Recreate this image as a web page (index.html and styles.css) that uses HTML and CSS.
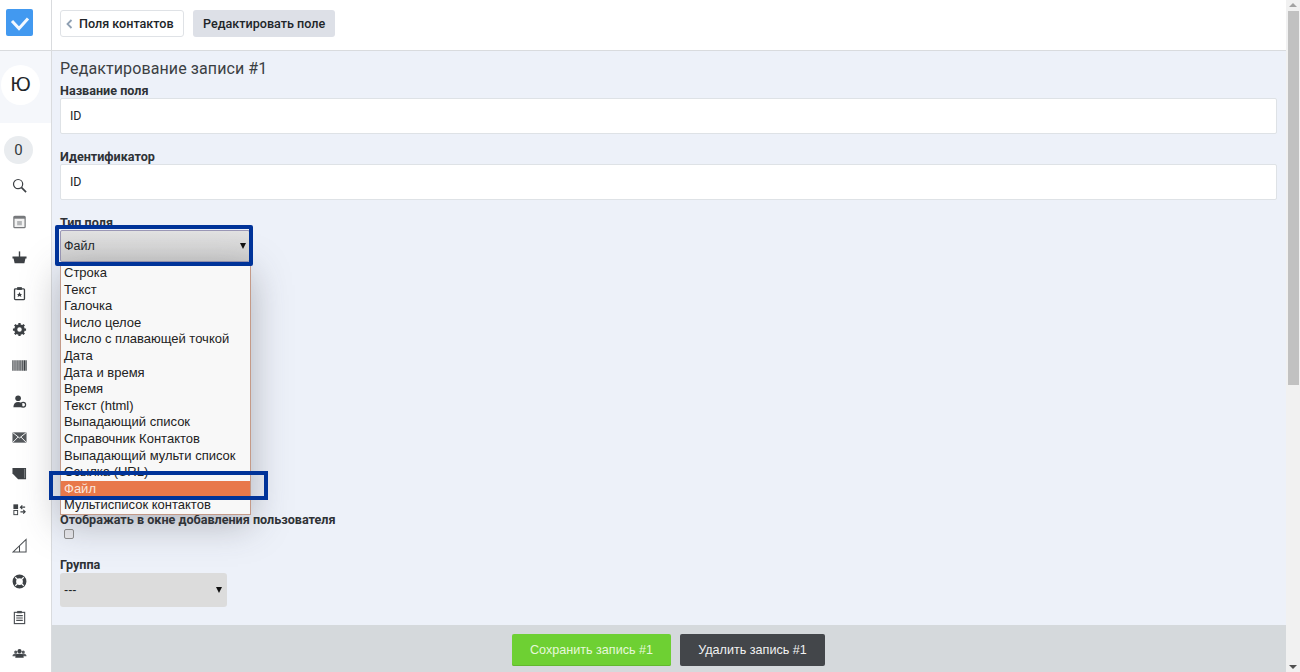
FILE: index.html
```html
<!DOCTYPE html>
<html lang="ru">
<head>
<meta charset="utf-8">
<title>Редактирование записи</title>
<link rel="stylesheet" href="styles.css">
</head>
<body>
<div class="app">
  <aside class="sidebar">
    <div class="logo-cell">
      <span class="logo">
        <svg viewBox="0 0 27 27" width="27" height="27"><path d="M6 12l7 7.500 9-10" fill="none" stroke="#f2f8ff" stroke-width="3"/></svg>
      </span>
    </div>
    <div class="user-cell"><span class="avatar">Ю</span></div>
    <nav class="nav">
      <div class="nav-item"><span class="counter">0</span></div>
      <div class="nav-item"><svg class="ico" viewBox="0 0 16 16"><circle cx="6.500" cy="6.500" r="4.900" fill="none" stroke="#3d4145" stroke-width="1.300"/><path d="M10 10l5 5" stroke="#3d4145" stroke-width="1.800"/></svg></div>
      <div class="nav-item"><svg class="ico" viewBox="0 0 16 16"><rect x="2" y="2.500" width="12" height="12" rx="1" fill="#f2f2f2" stroke="#77797c" stroke-width="1.300"/><rect x="2" y="2.500" width="12" height="2.500" fill="#77797c"/><rect x="5.500" y="7.500" width="5" height="4.500" fill="#b3b5b7"/></svg></div>
      <div class="nav-item"><svg class="ico" viewBox="0 0 16 16"><path d="M.500 7h15v2h-1.200l-1.100 5H2.800L1.700 9H.500z" fill="#3d4145"/><path d="M8 1.500V9" stroke="#3d4145" stroke-width="1.500"/></svg></div>
      <div class="nav-item"><svg class="ico" viewBox="0 0 16 16"><rect x="2.700" y="3" width="10.600" height="11.500" rx="1" fill="none" stroke="#3d4145" stroke-width="1.400"/><rect x="5.500" y="1.200" width="5" height="3" fill="#3d4145"/><path d="M8 6.500l1 2h1.800l-1.300 1.200.5 2L8 10.600l-2 1.100.5-2L5.200 8.500H7z" fill="#3d4145"/></svg></div>
      <div class="nav-item"><svg class="ico" viewBox="0 0 16 16"><circle cx="8" cy="8" r="4" fill="none" stroke="#3d4145" stroke-width="3.200"/><path d="M8 1v3M8 12v3M1 8h3M12 8h3M3 3l2.200 2.200M10.800 10.800L13 13M13 3l-2.200 2.200M5.200 10.800L3 13" stroke="#3d4145" stroke-width="2.400"/></svg></div>
      <div class="nav-item"><svg class="ico" viewBox="0 0 16 16"><path d="M1 2.500v11M3.200 2.500v11M5.400 2.500v11M7.500 2.500v11M9.500 2.500v11M11.500 2.500v11M13.300 2.500v11M15 2.500v11" stroke="#3d4145" stroke-width="1.300"/></svg></div>
      <div class="nav-item"><svg class="ico" viewBox="0 0 16 16"><circle cx="6.500" cy="4.500" r="3" fill="#3d4145"/><path d="M1.500 14c0-3.500 2-5.500 5-5.500s4 1 4.500 2.500v3z" fill="#3d4145"/><circle cx="12" cy="11.500" r="2.500" fill="none" stroke="#3d4145" stroke-width="1.300"/></svg></div>
      <div class="nav-item"><svg class="ico" viewBox="0 0 16 16"><rect x=".500" y="2.500" width="15" height="11" fill="#55595d"/><path d="M.500 2.500L8 8.500l7.500-6M.500 13.500l6-6M15.500 13.500l-6-6" fill="none" stroke="#fff" stroke-width="1"/></svg></div>
      <div class="nav-item"><svg class="ico" viewBox="0 0 16 16"><path d="M.500 2h14.500v12H6.500L.500 8z" fill="#3d4145"/><path d="M13.500 3v10" stroke="#8a8d90" stroke-width="1"/></svg></div>
      <div class="nav-item"><svg class="ico" viewBox="0 0 16 16"><rect x="1.500" y="2.500" width="5" height="5" fill="#3d4145"/><rect x="2" y="9" width="4" height="4.500" fill="none" stroke="#3d4145"/><path d="M9 5.500h5M11 3.500L9 5.500l2 2M14 10.500H9M12 8.500l2 2-2 2" fill="none" stroke="#3d4145" stroke-width="1.200"/></svg></div>
      <div class="nav-item"><svg class="ico" viewBox="0 0 16 16"><path d="M1 15L15 1.500V15zM8 8v7" fill="none" stroke="#4a4e52" stroke-width="1.100"/></svg></div>
      <div class="nav-item"><svg class="ico" viewBox="0 0 16 16"><circle cx="8" cy="8" r="5.500" fill="none" stroke="#3d4145" stroke-width="3.800"/><path d="M3.500 3.500l2.500 2.500M12.500 3.500L10 6M3.500 12.500L6 10M12.500 12.500L10 10" stroke="#fff" stroke-width="1.300"/></svg></div>
      <div class="nav-item"><svg class="ico" viewBox="0 0 16 16"><rect x="2.500" y="2.500" width="11" height="12" fill="none" stroke="#4a4e52" stroke-width="1.200"/><rect x="5.500" y="1" width="5" height="2.500" fill="#4a4e52"/><path d="M4.500 6h7M4.500 8.500h7M4.500 11h7" stroke="#4a4e52" stroke-width="1.200"/></svg></div>
      <div class="nav-item"><svg class="ico" viewBox="0 0 16 16"><circle cx="4" cy="6.500" r="1.700" fill="#55595d"/><circle cx="12" cy="6.500" r="1.700" fill="#55595d"/><circle cx="8" cy="5.500" r="2.200" fill="#3d4145"/><path d="M.500 11c0-2 1.500-3 3.500-3s3 1 3 3zM9 11c0-2 1-3 3-3s3.500 1 3.500 3z" fill="#55595d"/><path d="M3.500 12.500c0-3 2-4.500 4.500-4.500s4.500 1.500 4.500 4.500z" fill="#3d4145"/></svg></div>
    </nav>
  </aside>

  <div class="main">
    <header class="topbar">
      <a class="crumb crumb-back"><svg class="chev" viewBox="0 0 7 10" width="7" height="10"><path d="M5.500 1L1.500 5l4 4" fill="none" stroke="#8fa0b3" stroke-width="1.800"/></svg>Поля контактов</a>
      <a class="crumb crumb-current">Редактировать поле</a>
    </header>
    <div class="content">
      <h1 class="title">Редактирование записи #1</h1>
      <div class="field">
        <label class="label">Название поля</label>
        <div class="input">ID</div>
      </div>
      <div class="field">
        <label class="label">Идентификатор</label>
        <div class="input">ID</div>
      </div>
      <div class="field field-type">
        <label class="label">Тип поля</label>
        <div class="select select-open">Файл<span class="arrow"></span></div>
      </div>
      <div class="field field-check">
        <label class="label">Отображать в окне добавления пользователя</label>
        <span class="checkbox"></span>
      </div>
      <div class="field field-group">
        <label class="label">Группа</label>
        <div class="select select-group">---<span class="arrow"></span></div>
      </div>
    </div>
    <footer class="footer">
      <button class="btn btn-save">Сохранить запись #1</button>
      <button class="btn btn-delete">Удалить запись #1</button>
    </footer>
  </div>

  <div class="scrollbar">
    <span class="sb-up"></span>
    <div class="sb-track"><span class="sb-thumb"></span></div>
    <span class="sb-down"></span>
  </div>
</div>

<ul class="dropdown">
  <li>Строка</li>
  <li>Текст</li>
  <li>Галочка</li>
  <li>Число целое</li>
  <li>Число с плавающей точкой</li>
  <li>Дата</li>
  <li>Дата и время</li>
  <li>Время</li>
  <li>Текст (html)</li>
  <li>Выпадающий список</li>
  <li>Справочник Контактов</li>
  <li>Выпадающий мульти список</li>
  <li>Ссылка (URL)</li>
  <li class="active">Файл</li>
  <li>Мультисписок контактов</li>
</ul>
<div class="mark mark-select"></div>
<div class="mark mark-option"></div>
</body>
</html>
```
FILE: styles.css
```css
* { box-sizing: border-box; }
html, body { margin: 0; height: 100%; overflow: hidden; }
body { font-family: Roboto, "Liberation Sans", sans-serif; color: #212529; background: #fff; position: relative; }

.app { display: flex; width: 1300px; height: 672px; }

.sidebar { width: 52px; flex: none; background: #fff; border-right: 1px solid #d9dbde; display: flex; flex-direction: column; }
.logo-cell { height: 51px; flex: none; padding: 9px 0 0 6px; border-bottom: 1px solid #d9dbde; width: 52px; }
.logo { display: block; width: 27px; height: 27px; background: #4299f0; border-radius: 2px; }
.logo svg { display: block; }
.user-cell { height: 72px; flex: none; background: #f5f7fb; display: flex; align-items: center; padding-left: 1px; }
.avatar { width: 39px; height: 40px; margin-top: -5px; border-radius: 50%; background: #fff; display: flex; align-items: center; justify-content: center; font-family: "Liberation Sans", sans-serif; font-size: 20px; color: #212529; }
.nav { display: flex; flex-direction: column; padding-top: 9px; }
.nav-item { height: 35.960px; display: flex; align-items: center; padding-left: 12px; }
.counter { width: 29px; height: 28px; margin-left: -8px; border-radius: 50%; background: #e9ecef; display: flex; align-items: center; justify-content: center; font-size: 15px; color: #343a40; }
.ico { width: 15px; height: 15px; display: block; }

.main { flex: 1; min-width: 0; display: flex; flex-direction: column; height: 672px; }
.topbar { height: 51px; flex: none; background: #fff; border-bottom: 1px solid #d9dbde; padding: 10px 8px 0; display: flex; gap: 9px; align-items: flex-start; }
.crumb { height: 27px; display: flex; align-items: center; font-size: 12.600px; font-weight: 500; color: #212529; border-radius: 3px; }
.crumb-back { width: 124px; border: 1px solid #dfe2e6; background: #fff; padding-left: 5px; }
.chev { margin-right: 6px; flex: none; }
.crumb-current { width: 142px; background: #dde0e7; padding-left: 10px; }

.content { flex: 1; min-height: 0; overflow: hidden; background: #edf1f9; padding: 8px 9px 0 8px; }
.title { margin: 0; font-size: 16px; font-weight: 400; line-height: 19px; color: #3b3f43; letter-spacing: .1px; }
.field { margin-bottom: 16px; }
.label { display: block; font-size: 12.600px; font-weight: 700; line-height: 14px; color: #2e3236; margin-top: 6px; height: 14px; white-space: nowrap; }
.input { height: 36px; background: #fff; border: 1px solid #dee2e6; border-radius: 2px; padding-left: 9px; font-size: 12.400px; line-height: 34px; color: #212529; }
.field-type { height: 291px; margin-bottom: 0; }
.field-type .label { margin-top: 1px; }
.select { position: relative; width: 167px; height: 34px; background: #dcdcdc; border-radius: 3px; padding-left: 4px; font-family: "Liberation Sans", sans-serif; font-size: 12.500px; line-height: 34px; color: #212529; }
.select-open { width: 190px; border: 1px solid #9b98b6; background: linear-gradient(#e2e2e2, #cfcfcf); line-height: 30px; height: 32px; padding-left: 3px; border-radius: 2px; }
.arrow { position: absolute; right: 5px; top: 14px; width: 0; height: 0; border-left: 3.500px solid transparent; border-right: 3.500px solid transparent; border-top: 6px solid #111; }
.select-open .arrow { right: 3px; top: 12px; }
.checkbox { display: block; width: 10px; height: 10px; margin: 2px 0 0 4px; border: 1px solid #8f8f8f; border-radius: 2px; background: #e9e9ed; }
.field-check { margin-bottom: 19px; }
.field-group .label { margin-bottom: 1px; }

.footer { height: 47px; flex: none; background: #d5d9dc; display: flex; justify-content: center; gap: 9px; padding-top: 9px; padding-right: 1px; }
.btn { height: 32px; border: 0; border-radius: 2px; font-family: "Liberation Sans", sans-serif; font-size: 12.600px; padding: 0; }
.btn-save { width: 159px; background: #6ed033; color: #e6f8da; box-shadow: inset 0 -1px 0 #62b82e; }
.btn-delete { width: 145px; background: #43464a; color: #f2f2f2; }

.scrollbar { width: 14px; flex: none; height: 672px; background: #f1f1f1; display: flex; flex-direction: column; align-items: center; position: relative; }
.sb-up { margin-top: 3px; width: 0; height: 0; border-left: 4px solid transparent; border-right: 4px solid transparent; border-bottom: 4px solid #a3a3a3; }
.sb-track { flex: 1; width: 100%; padding: 4px 1px 0 2px; }
.sb-thumb { display: block; height: 374px; background: #c1c1c1; }
.sb-down { margin-bottom: 3px; width: 0; height: 0; border-left: 4px solid transparent; border-right: 4px solid transparent; border-top: 4px solid #505050; }

.dropdown { position: absolute; left: 60px; top: 264px; width: 191px; height: 251px; margin: 0; padding: 1px 0 0; list-style: none; background: #f8f8f8; border: 1px solid #c49a88; border-top: 0; font-family: "Liberation Sans", sans-serif; font-size: 13px; color: #222; box-shadow: 0 8px 36px rgba(60, 60, 70, .35); }
.dropdown li { height: 16.600px; line-height: 16.500px; padding-left: 3px; white-space: nowrap; }
.dropdown .active { background: #e8784a; color: #fbe6dc; }

.mark { position: absolute; border: 4px solid #003399; }
.mark-select { left: 55px; top: 225px; width: 198px; height: 41px; border-radius: 2px; }
.mark-option { left: 49px; top: 471px; width: 219px; height: 29px; }
```
